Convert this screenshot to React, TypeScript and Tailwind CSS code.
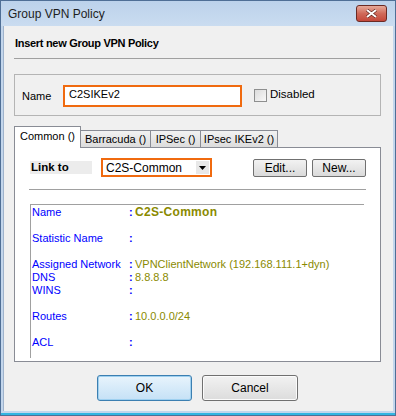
import React from 'react';

const rows: { label: string; value?: string; bold?: boolean }[] = [
  { label: 'Name', value: 'C2S-Common', bold: true },
  { label: '' },
  { label: 'Statistic Name', value: '' },
  { label: '' },
  { label: 'Assigned Network', value: 'VPNClientNetwork (192.168.111.1+dyn)' },
  { label: 'DNS', value: '8.8.8.8' },
  { label: 'WINS', value: '' },
  { label: '' },
  { label: 'Routes', value: '10.0.0.0/24' },
  { label: '' },
  { label: 'ACL', value: '' },
];

function Tab({ label, width }: { label: string; width: string }) {
  return (
    <div
      className={`${width} h-[17px] mt-[4px] -ml-px first:ml-0 border border-b-0 border-[#898c95] bg-gradient-to-b from-[#f2f2f2] to-[#dcdcdc] flex items-center justify-center text-[11px] text-black`}
    >
      {label}
    </div>
  );
}

export default function App() {
  return (
    <div
      className="w-[396px] h-[416px] bg-[#c3d6ec] border border-[#4f6f96] flex flex-col overflow-hidden"
      style={{ fontFamily: '"Liberation Sans", Arial, sans-serif' }}
    >
      {/* title bar */}
      <div className="h-[25px] flex items-center bg-gradient-to-b from-[#bcd2eb] to-[#cadcf0] px-[7px]">
        <span className="text-[12px] text-[#1e1e1e] flex-1">Group VPN Policy</span>
        <div className="w-[31px] h-[17px] mr-[1px] mt-[-1px] rounded-[3px] border border-[#6b2a24] bg-gradient-to-b from-[#e6a99a] via-[#d06a5a] to-[#c4473a] flex items-center justify-center">
          <svg width="11" height="9" viewBox="0 0 11 9">
            <path d="M1 1 L10 8 M10 1 L1 8" stroke="#5a1c16" strokeWidth="3.2" />
            <path d="M1 1 L10 8 M10 1 L1 8" stroke="#ffffff" strokeWidth="2" />
          </svg>
        </div>
      </div>

      {/* client area */}
      <div className="flex-1 mx-[2px] mb-[2px] bg-[#f0f0f0] border-l border-[#9fb3cc] flex flex-col px-[10px] text-[11px] text-black">
        <div className="mt-[11px] h-[13px] leading-[13px] font-bold text-[11px] tracking-[-0.3px] pl-[1px]">
          Insert new Group VPN Policy
        </div>
        <div className="mt-[8px] w-[366px] h-px bg-[#a0a0a0]" />

        {/* name group */}
        <div className="mt-[15px] w-[367px] h-[42px] border border-[#b4b4b4] flex items-center pl-[7px] pt-[2px]">
          <span className="w-[41px]">Name</span>
          <div className="w-[179px] h-[22px] border-2 border-[#f06a0f] bg-white flex items-center pl-[4px] pb-[3px]">
            C2SIKEv2
          </div>
          <div className="ml-[12px] w-[13px] h-[13px] border border-[#8e8f8f] bg-gradient-to-br from-[#dcdcdc] to-[#f8f8f8] mb-[2px]" />
          <span className="ml-[3px] mb-[2px] text-[11.5px]">Disabled</span>
        </div>

        {/* tabs */}
        <div className="mt-[10px] flex h-[21px] relative z-10">
          <div className="w-[67px] h-[22px] border border-b-0 border-[#898c95] bg-white flex items-center justify-center pb-[3px]">
            Common ()
          </div>
          <Tab label="Barracuda ()" width="w-[71px]" />
          <Tab label="IPSec ()" width="w-[51px]" />
          <Tab label="IPsec IKEv2 ()" width="w-[78px]" />
        </div>

        {/* tab panel */}
        <div className="w-[367px] h-[215px] border border-[#898c95] bg-white flex flex-col">
          <div className="mt-[10px] flex items-center h-[19px]">
            <div className="ml-[15px] w-[62px] h-[13px] bg-[#ececec] font-bold text-[11.5px] leading-[13px] pl-[1px]">Link to</div>
            <div className="ml-[9px] w-[111px] h-[19px] border-2 border-[#f06a0f] bg-white flex items-center">
              <span className="flex-1 pl-[3px] text-[12px]">C2S-Common</span>
              <div className="w-[13px] h-[13px] mr-[1px] bg-[#e8e8e8] flex items-center justify-center">
                <svg width="7" height="4" viewBox="0 0 7 4">
                  <path d="M0 0 L7 0 L3.5 4 Z" fill="#000" />
                </svg>
              </div>
            </div>
            <button className="ml-[41px] w-[54px] h-[18px] rounded-[2px] border border-[#707070] bg-gradient-to-b from-[#f2f2f2] to-[#dadada] text-[12px] flex items-center justify-center">
              Edit...
            </button>
            <button className="ml-[5px] w-[54px] h-[18px] rounded-[2px] border border-[#707070] bg-gradient-to-b from-[#f2f2f2] to-[#dadada] text-[12px] flex items-center justify-center">
              New...
            </button>
          </div>
          <div className="mt-[12px] ml-[14px] w-[337px] h-px bg-[#a0a0a0]" />

          {/* info box */}
          <div className="mt-[14px] ml-[15px] w-[334px] h-[154px] border-t border-l border-[#a0a0a0] pt-[1px] pl-[1px]">
            {rows.map((r, i) => (
              <div key={i} className="flex h-[13px] leading-[13px] text-[11px]">
                {r.label && (
                  <>
                    <span className="w-[97px] text-[#0000ff]">{r.label}</span>
                    <span className="w-[6px] text-[#0000ff] font-bold">:</span>
                    <span className={`text-[#8a8a00] ${r.bold ? 'font-bold text-[12px] tracking-[0.3px]' : ''}`}>{r.value}</span>
                  </>
                )}
              </div>
            ))}
          </div>
        </div>

        {/* bottom buttons */}
        <div className="mt-[13px] flex pl-[83px] gap-[10px]">
          <button className="w-[95px] h-[26px] rounded-[3px] border border-[#3c7fb1] bg-gradient-to-b from-[#e8f4fc] to-[#c5e1f6] text-[12px] shadow-[inset_0_0_0_1px_#9ed0f0]">
            OK
          </button>
          <button className="w-[96px] h-[26px] rounded-[3px] border border-[#707070] bg-gradient-to-b from-[#f2f2f2] to-[#dcdcdc] text-[12px] shadow-[inset_0_0_0_1px_#fbfbfb]">
            Cancel
          </button>
        </div>
      </div>
      <div className="h-[2px] bg-[#33b5e1]" />
    </div>
  );
}
